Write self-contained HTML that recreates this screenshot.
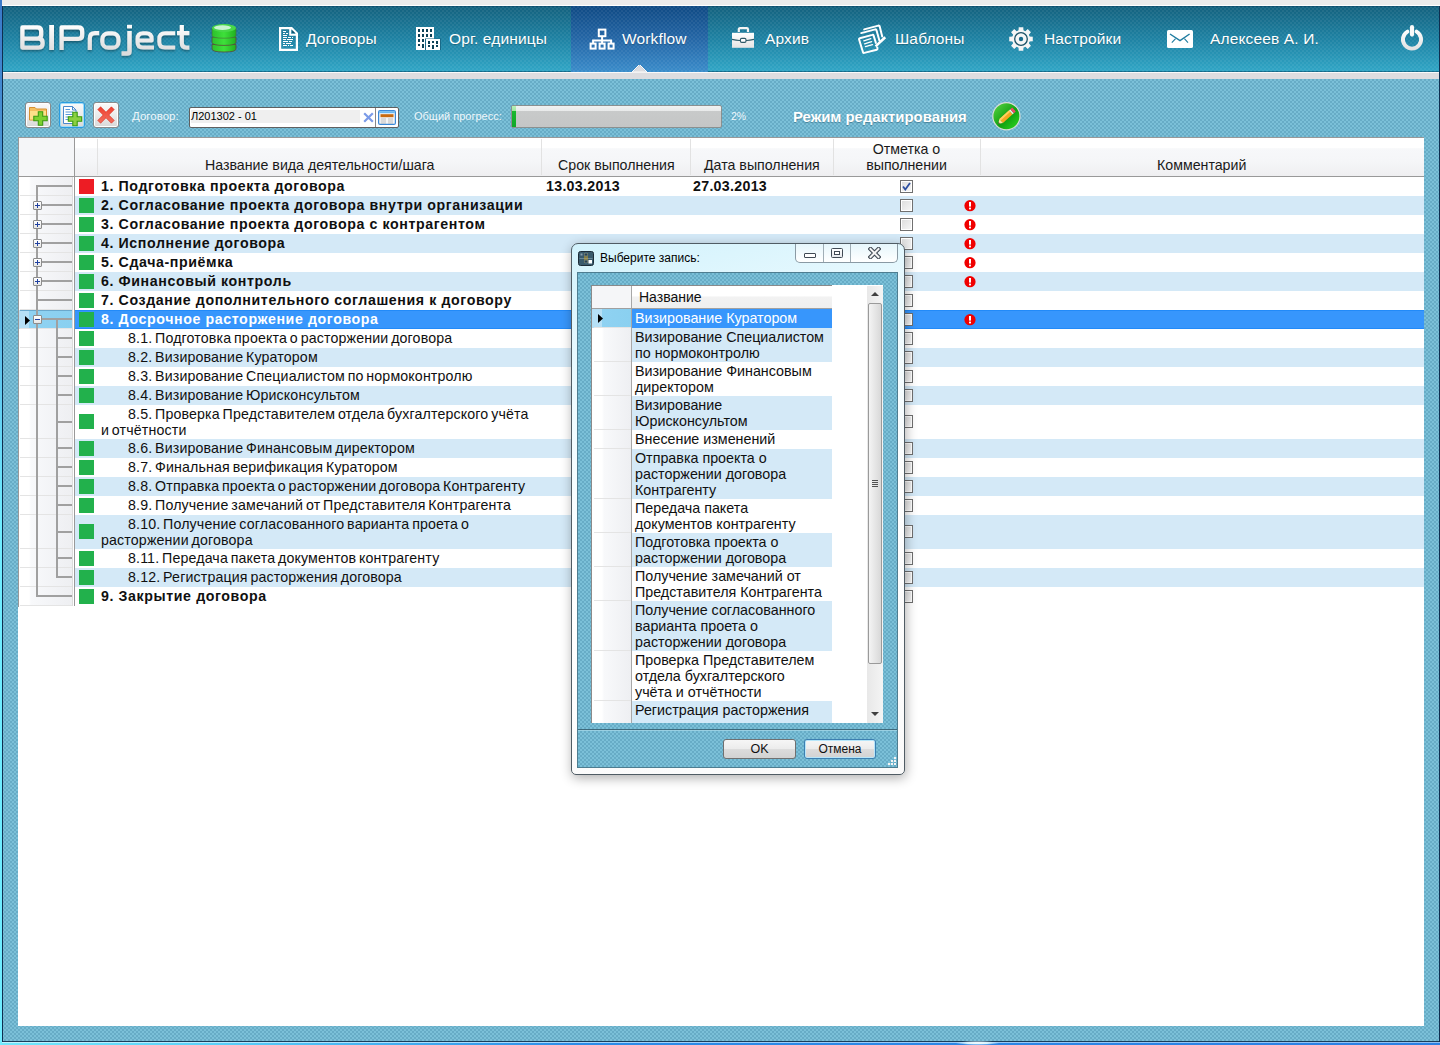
<!DOCTYPE html>
<html><head><meta charset="utf-8"><style>
*{margin:0;padding:0;box-sizing:border-box}
html,body{width:1440px;height:1045px;overflow:hidden}
body{position:relative;font-family:"Liberation Sans",sans-serif;background:#70b4cc}
.a{position:absolute}
.pat{background-image:repeating-conic-gradient(rgba(255,255,255,.06) 0 25%,rgba(0,0,0,.0) 0 50%);background-size:4px 4px}
.nav{position:absolute;top:0;height:72px;color:#fff;font-size:15.5px;white-space:nowrap}
.navt{position:absolute;top:30px;line-height:18px;letter-spacing:.15px;text-shadow:0 1px 1px rgba(0,0,0,.25)}
.row{position:absolute;left:75px;width:1349px}
.rt{position:absolute;left:101px;font-size:14.2px;line-height:16px;color:#101010;white-space:nowrap;letter-spacing:.15px;word-spacing:-1.3px}
.b{font-weight:bold;letter-spacing:.6px;word-spacing:0}
.sq{position:absolute;left:79px;width:15px;height:15px;background:#22b14c}
.cb{position:absolute;left:900px;width:13px;height:13px;border:1px solid #707070;background:linear-gradient(135deg,#dcdcdc,#f8f8f8);box-shadow:inset 0 0 0 1px #fff}
.ex{position:absolute;left:964px;width:12px;height:12px}
.tl{position:absolute;background:#a0a0a0}
.sep{position:absolute;left:20px;width:52px;height:1px;background:#e4e4e4}
.hd{position:absolute;font-size:14.2px;color:#1a1a1a;white-space:nowrap;line-height:16px}
.dr{position:absolute;left:632px;width:200px;font-size:14px;line-height:16px;color:#101010;padding:1px 0 0 3px}
.btn{position:absolute;border:1px solid #707070;border-radius:3px;background:linear-gradient(#f6f6f6 0%,#ececec 48%,#dcdcdc 52%,#d2d2d2 100%);font-size:12.5px;color:#101010;text-align:center;line-height:18px}
</style></head>
<body>
<div class="a" style="left:0;top:0;width:1440px;height:5px;background:#ebebeb"></div>
<div class="a" style="left:0;top:5px;width:1440px;height:1px;background:#fff"></div>
<div class="a pat" style="left:0;top:6px;width:1440px;height:66px;background-color:#1f7e9e;background:linear-gradient(#0b5070 0,#0b5070 1px,#14627f 1px,#1e82a3 50%,#30a5c5 98%,#136c8c 98%);"></div>
<div class="a pat" style="left:0;top:6px;width:1440px;height:66px"></div>
<div class="a" style="left:571px;top:6px;width:137px;height:66px;background:linear-gradient(#0f4a84,#2466a6 50%,#3a8cca)"></div>
<div class="a pat" style="left:571px;top:6px;width:137px;height:66px"></div>
<div class="a" style="left:0;top:72px;width:1440px;height:1px;background:#fafafa"></div>
<div class="a" style="left:0;top:73px;width:1440px;height:6px;background:#dddde0"></div>
<svg class="a" style="left:632px;top:65px" width="15" height="8"><polygon points="0,7.5 7.5,0 15,7.5" fill="#dddde0"/><polygon points="0,7 7.5,-0.5 15,7" fill="none" stroke="#fafafa" stroke-width="1"/></svg>
<div class="a" style="left:0;top:79px;width:1440px;height:962px;background:repeating-conic-gradient(#7bc0d8 0 25%,#67acc6 0 50%);background-size:4px 4px"></div>
<div class="a" style="left:0;top:1041px;width:1440px;height:1px;background:#1a3c5a"></div>
<div class="a" style="left:0;top:1042px;width:1440px;height:3px;background:linear-gradient(90deg,#70e8fc 0,#58d0f8 15%,#2a8ce8 40%,#2a80e4 100%)"></div>
<div class="a" style="left:0;top:1042px;width:1440px;height:1px;background:linear-gradient(90deg,#c0f4ff,#a0d0f8 50%,#90c0f0)"></div>
<div class="a" style="left:955px;top:1041px;width:45px;height:4px;background:radial-gradient(ellipse at center,#ffffff 0,#d8f4ff 35%,rgba(120,200,250,0) 70%)"></div>
<div class="a" style="left:0;top:0;width:2px;height:1045px;background:linear-gradient(#3a78c8,#5ab8e8 30%,#70ecff 50%,#70ecff)"></div>
<div class="a" style="left:2px;top:6px;width:1px;height:1036px;background:#0e2e50"></div>
<div class="a" style="left:1439px;top:6px;width:1px;height:1036px;background:#0e2e50"></div>
<div class="navt a" style="left:306px;color:#fff;font-size:15.5px;white-space:nowrap">Договоры</div>
<div class="navt a" style="left:449px;color:#fff;font-size:15.5px;white-space:nowrap">Орг. единицы</div>
<div class="navt a" style="left:622px;color:#fff;font-size:15.5px;white-space:nowrap">Workflow</div>
<div class="navt a" style="left:765px;color:#fff;font-size:15.5px;white-space:nowrap">Архив</div>
<div class="navt a" style="left:895px;color:#fff;font-size:15.5px;white-space:nowrap">Шаблоны</div>
<div class="navt a" style="left:1044px;color:#fff;font-size:15.5px;white-space:nowrap">Настройки</div>
<div class="navt a" style="left:1210px;color:#fff;font-size:15.5px;white-space:nowrap">Алексеев А. И.</div>
<div class="a" style="left:25px;top:102px;width:26px;height:26px;border:1px solid #8a8a8a;border-radius:3px;box-shadow:inset 0 0 0 1px #fff;background:linear-gradient(#fafafa,#ececec 50%,#d8d8d8)"></div>
<div class="a" style="left:59px;top:102px;width:26px;height:26px;border:1px solid #2a9ce0;border-radius:3px;box-shadow:inset 0 0 0 1px #9edcf8;background:linear-gradient(#fafafa,#ececec 50%,#d8d8d8)"></div>
<div class="a" style="left:93px;top:102px;width:26px;height:26px;border:1px solid #8a8a8a;border-radius:3px;box-shadow:inset 0 0 0 1px #fff;background:linear-gradient(#fafafa,#ececec 50%,#d8d8d8)"></div>
<div class="a" style="left:132px;top:110px;font-size:11.5px;color:#eef6fa">Договор:</div>
<div class="a" style="left:189px;top:107px;width:210px;height:21px;border:1px solid #606060;border-radius:2px;background:#fff"></div>
<div class="a" style="left:191px;top:110px;width:169px;height:13px;background:#efefef"></div>
<div class="a" style="left:191px;top:110px;font-size:11px;color:#000;line-height:13px">Л201302 - 01</div>
<div class="a" style="left:375px;top:108px;width:1px;height:19px;background:#888"></div>
<div class="a" style="left:414px;top:110px;font-size:11px;color:#eef6fa">Общий прогресс:</div>
<div class="a" style="left:511px;top:105px;width:211px;height:23px;border:1px solid #8a9090;border-radius:2px;background:linear-gradient(#f0f2f2 0,#e8eaea 22%,#c8caca 24%,#c4c6c6)"></div>
<div class="a" style="left:512px;top:106px;width:4px;height:21px;background:linear-gradient(#b8f0b8 0,#a0e8a0 22%,#18b830 24%,#10a828)"></div>
<div class="a" style="left:731px;top:110px;font-size:10.5px;color:#eef6fa">2%</div>
<div class="a" style="left:793px;top:109px;font-size:14.9px;font-weight:bold;color:#fff;text-shadow:0 1px 1px rgba(0,40,60,.35)">Режим редактирования</div>
<div class="a" style="left:18px;top:137px;width:1406px;height:889px;background:#fff"></div>
<div class="a" style="left:18px;top:137px;width:1406px;height:470px;border-left:1px solid #999;border-top:1px solid #999"></div>
<div class="a" style="left:75px;top:138px;width:1349px;height:38px;background:linear-gradient(#fff 0,#fff 26%,#f7f8fa 28%,#f5f6f8 60%,#efeff1 100%)"></div>
<div class="a" style="left:19px;top:138px;width:55px;height:38px;background:#f5f6f8"></div>
<div class="a" style="left:18px;top:176px;width:1406px;height:1px;background:#999"></div>
<div class="a" style="left:74px;top:137px;width:1px;height:469px;background:#999"></div>
<div class="a" style="left:97px;top:139px;width:1px;height:36px;background:#e2e2e2"></div>
<div class="a" style="left:541px;top:139px;width:1px;height:36px;background:#e2e2e2"></div>
<div class="a" style="left:690px;top:139px;width:1px;height:36px;background:#e2e2e2"></div>
<div class="a" style="left:833px;top:139px;width:1px;height:36px;background:#e2e2e2"></div>
<div class="a" style="left:980px;top:139px;width:1px;height:36px;background:#e2e2e2"></div>
<div class="hd" style="left:205px;top:157px">Название вида деятельности/шага</div>
<div class="hd" style="left:558px;top:157px">Срок выполнения</div>
<div class="hd" style="left:704px;top:157px">Дата выполнения</div>
<div class="hd" style="left:833px;width:147px;text-align:center;top:141px;line-height:16px">Отметка о<br>выполнении</div>
<div class="hd" style="left:1157px;top:157px">Комментарий</div>
<div class="row" style="top:177px;height:19px;background:#ffffff"></div>
<div class="a" style="left:19px;top:177px;width:53px;height:19px;background:linear-gradient(90deg,#fff 0,#fff 10px,#f8f9fb 12px,#eeeff2 53px)"></div>
<div class="sep" style="top:195px"></div>
<div class="sq" style="top:179px;background:#ed1c24"></div>
<div class="rt b" style="top:178px;left:101px;color:#101010">1. Подготовка проекта договора</div>
<div class="rt b" style="top:178px;left:546px;letter-spacing:.3px">13.03.2013</div>
<div class="rt b" style="top:178px;left:693px;letter-spacing:.3px">27.03.2013</div>
<div class="cb" style="top:180px"></div><svg class="a" style="left:902px;top:182px" width="9" height="9" viewBox="0 0 9 9"><path d="M1 4.5 L3.3 7.5 L8 1" fill="none" stroke="#2d4fa0" stroke-width="1.8"/></svg>
<div class="tl" style="left:36px;top:185px;width:2px;height:11px"></div>
<div class="tl" style="left:37px;top:185px;width:35px;height:2px"></div>
<div class="row" style="top:196px;height:19px;background:#d4e9f7"></div>
<div class="a" style="left:19px;top:196px;width:53px;height:19px;background:linear-gradient(90deg,#fff 0,#fff 10px,#f8f9fb 12px,#eeeff2 53px)"></div>
<div class="sep" style="top:214px"></div>
<div class="sq" style="top:198px;background:#22b14c"></div>
<div class="rt b" style="top:197px;left:101px;color:#101010">2. Согласование проекта договора внутри организации</div>
<div class="cb" style="top:199px"></div>
<svg class="ex" style="top:200px" width="12" height="12" viewBox="0 0 12 12"><circle cx="6" cy="5.7" r="5.6" fill="#f00000"/><rect x="5" y="2" width="2" height="4.6" fill="#fff"/><rect x="5" y="7.6" width="2" height="1.8" fill="#fff"/></svg>
<div class="tl" style="left:36px;top:196px;width:2px;height:19px"></div>
<div class="tl" style="left:37px;top:204px;width:35px;height:2px"></div>
<div class="a" style="left:33px;top:201px;width:9px;height:9px;border:1px solid #8c8c8c;border-radius:1px;background:linear-gradient(#fff,#e6e6e6)"></div>
<div class="a" style="left:35px;top:205px;width:5px;height:1px;background:#2040a0"></div>
<div class="a" style="left:37px;top:203px;width:1px;height:5px;background:#2040a0"></div>
<div class="row" style="top:215px;height:19px;background:#ffffff"></div>
<div class="a" style="left:19px;top:215px;width:53px;height:19px;background:linear-gradient(90deg,#fff 0,#fff 10px,#f8f9fb 12px,#eeeff2 53px)"></div>
<div class="sep" style="top:233px"></div>
<div class="sq" style="top:217px;background:#22b14c"></div>
<div class="rt b" style="top:216px;left:101px;color:#101010">3. Согласование проекта договора с контрагентом</div>
<div class="cb" style="top:218px"></div>
<svg class="ex" style="top:219px" width="12" height="12" viewBox="0 0 12 12"><circle cx="6" cy="5.7" r="5.6" fill="#f00000"/><rect x="5" y="2" width="2" height="4.6" fill="#fff"/><rect x="5" y="7.6" width="2" height="1.8" fill="#fff"/></svg>
<div class="tl" style="left:36px;top:215px;width:2px;height:19px"></div>
<div class="tl" style="left:37px;top:223px;width:35px;height:2px"></div>
<div class="a" style="left:33px;top:220px;width:9px;height:9px;border:1px solid #8c8c8c;border-radius:1px;background:linear-gradient(#fff,#e6e6e6)"></div>
<div class="a" style="left:35px;top:224px;width:5px;height:1px;background:#2040a0"></div>
<div class="a" style="left:37px;top:222px;width:1px;height:5px;background:#2040a0"></div>
<div class="row" style="top:234px;height:19px;background:#d4e9f7"></div>
<div class="a" style="left:19px;top:234px;width:53px;height:19px;background:linear-gradient(90deg,#fff 0,#fff 10px,#f8f9fb 12px,#eeeff2 53px)"></div>
<div class="sep" style="top:252px"></div>
<div class="sq" style="top:236px;background:#22b14c"></div>
<div class="rt b" style="top:235px;left:101px;color:#101010">4. Исполнение договора</div>
<div class="cb" style="top:237px"></div>
<svg class="ex" style="top:238px" width="12" height="12" viewBox="0 0 12 12"><circle cx="6" cy="5.7" r="5.6" fill="#f00000"/><rect x="5" y="2" width="2" height="4.6" fill="#fff"/><rect x="5" y="7.6" width="2" height="1.8" fill="#fff"/></svg>
<div class="tl" style="left:36px;top:234px;width:2px;height:19px"></div>
<div class="tl" style="left:37px;top:242px;width:35px;height:2px"></div>
<div class="a" style="left:33px;top:239px;width:9px;height:9px;border:1px solid #8c8c8c;border-radius:1px;background:linear-gradient(#fff,#e6e6e6)"></div>
<div class="a" style="left:35px;top:243px;width:5px;height:1px;background:#2040a0"></div>
<div class="a" style="left:37px;top:241px;width:1px;height:5px;background:#2040a0"></div>
<div class="row" style="top:253px;height:19px;background:#ffffff"></div>
<div class="a" style="left:19px;top:253px;width:53px;height:19px;background:linear-gradient(90deg,#fff 0,#fff 10px,#f8f9fb 12px,#eeeff2 53px)"></div>
<div class="sep" style="top:271px"></div>
<div class="sq" style="top:255px;background:#22b14c"></div>
<div class="rt b" style="top:254px;left:101px;color:#101010">5. Сдача-приёмка</div>
<div class="cb" style="top:256px"></div>
<svg class="ex" style="top:257px" width="12" height="12" viewBox="0 0 12 12"><circle cx="6" cy="5.7" r="5.6" fill="#f00000"/><rect x="5" y="2" width="2" height="4.6" fill="#fff"/><rect x="5" y="7.6" width="2" height="1.8" fill="#fff"/></svg>
<div class="tl" style="left:36px;top:253px;width:2px;height:19px"></div>
<div class="tl" style="left:37px;top:261px;width:35px;height:2px"></div>
<div class="a" style="left:33px;top:258px;width:9px;height:9px;border:1px solid #8c8c8c;border-radius:1px;background:linear-gradient(#fff,#e6e6e6)"></div>
<div class="a" style="left:35px;top:262px;width:5px;height:1px;background:#2040a0"></div>
<div class="a" style="left:37px;top:260px;width:1px;height:5px;background:#2040a0"></div>
<div class="row" style="top:272px;height:19px;background:#d4e9f7"></div>
<div class="a" style="left:19px;top:272px;width:53px;height:19px;background:linear-gradient(90deg,#fff 0,#fff 10px,#f8f9fb 12px,#eeeff2 53px)"></div>
<div class="sep" style="top:290px"></div>
<div class="sq" style="top:274px;background:#22b14c"></div>
<div class="rt b" style="top:273px;left:101px;color:#101010">6. Финансовый контроль</div>
<div class="cb" style="top:275px"></div>
<svg class="ex" style="top:276px" width="12" height="12" viewBox="0 0 12 12"><circle cx="6" cy="5.7" r="5.6" fill="#f00000"/><rect x="5" y="2" width="2" height="4.6" fill="#fff"/><rect x="5" y="7.6" width="2" height="1.8" fill="#fff"/></svg>
<div class="tl" style="left:36px;top:272px;width:2px;height:19px"></div>
<div class="tl" style="left:37px;top:280px;width:35px;height:2px"></div>
<div class="a" style="left:33px;top:277px;width:9px;height:9px;border:1px solid #8c8c8c;border-radius:1px;background:linear-gradient(#fff,#e6e6e6)"></div>
<div class="a" style="left:35px;top:281px;width:5px;height:1px;background:#2040a0"></div>
<div class="a" style="left:37px;top:279px;width:1px;height:5px;background:#2040a0"></div>
<div class="row" style="top:291px;height:19px;background:#ffffff"></div>
<div class="a" style="left:19px;top:291px;width:53px;height:19px;background:linear-gradient(90deg,#fff 0,#fff 10px,#f8f9fb 12px,#eeeff2 53px)"></div>
<div class="sep" style="top:309px"></div>
<div class="sq" style="top:293px;background:#22b14c"></div>
<div class="rt b" style="top:292px;left:101px;color:#101010">7. Создание дополнительного соглашения к договору</div>
<div class="cb" style="top:294px"></div>
<div class="tl" style="left:36px;top:291px;width:2px;height:19px"></div>
<div class="tl" style="left:37px;top:299px;width:35px;height:2px"></div>
<div class="row" style="top:310px;height:19px;background:#3796fc"></div>
<div class="row" style="top:310px;height:19px;border-top:1px solid #228af8;border-bottom:1px solid #228af8"></div>
<div class="a" style="left:19px;top:310px;width:53px;height:19px;background:linear-gradient(90deg,#b6e0f6 0,#b6e0f6 10px,#8fd2f2 10px,#8ad0f0)"></div>
<div class="a" style="left:20px;top:310px;width:52px;height:19px;border-top:1px solid #6aa8cc;border-bottom:1px solid #6aa8cc"></div>
<div class="sep" style="top:328px"></div>
<div class="sq" style="top:312px;background:#22b14c"></div>
<div class="rt b" style="top:311px;left:101px;color:#fff">8. Досрочное расторжение договора</div>
<div class="cb" style="top:313px"></div>
<svg class="ex" style="top:314px" width="12" height="12" viewBox="0 0 12 12"><circle cx="6" cy="5.7" r="5.6" fill="#f00000"/><rect x="5" y="2" width="2" height="4.6" fill="#fff"/><rect x="5" y="7.6" width="2" height="1.8" fill="#fff"/></svg>
<div class="tl" style="left:36px;top:310px;width:2px;height:19px"></div>
<div class="tl" style="left:37px;top:318px;width:35px;height:2px"></div>
<div class="a" style="left:33px;top:315px;width:9px;height:9px;border:1px solid #8c8c8c;border-radius:1px;background:linear-gradient(#fff,#e6e6e6)"></div>
<div class="a" style="left:35px;top:319px;width:5px;height:1px;background:#2040a0"></div>
<div class="tl" style="left:56px;top:318px;width:2px;height:11px"></div>
<svg class="a" style="left:25px;top:316px" width="6" height="10"><polygon points="0,0 5,4.5 0,9" fill="#000"/></svg>
<div class="row" style="top:329px;height:19px;background:#ffffff"></div>
<div class="a" style="left:19px;top:329px;width:53px;height:19px;background:linear-gradient(90deg,#fff 0,#fff 10px,#f8f9fb 12px,#eeeff2 53px)"></div>
<div class="sep" style="top:347px"></div>
<div class="sq" style="top:331px;background:#22b14c"></div>
<div class="rt" style="top:330px;left:128px;color:#101010">8.1. Подготовка проекта о расторжении договора</div>
<div class="cb" style="top:332px"></div>
<div class="tl" style="left:36px;top:329px;width:2px;height:19px"></div>
<div class="tl" style="left:56px;top:329px;width:2px;height:19px"></div>
<div class="tl" style="left:57px;top:337px;width:15px;height:2px"></div>
<div class="row" style="top:348px;height:19px;background:#d4e9f7"></div>
<div class="a" style="left:19px;top:348px;width:53px;height:19px;background:linear-gradient(90deg,#fff 0,#fff 10px,#f8f9fb 12px,#eeeff2 53px)"></div>
<div class="sep" style="top:366px"></div>
<div class="sq" style="top:350px;background:#22b14c"></div>
<div class="rt" style="top:349px;left:128px;color:#101010">8.2. Визирование Куратором</div>
<div class="cb" style="top:351px"></div>
<div class="tl" style="left:36px;top:348px;width:2px;height:19px"></div>
<div class="tl" style="left:56px;top:348px;width:2px;height:19px"></div>
<div class="tl" style="left:57px;top:356px;width:15px;height:2px"></div>
<div class="row" style="top:367px;height:19px;background:#ffffff"></div>
<div class="a" style="left:19px;top:367px;width:53px;height:19px;background:linear-gradient(90deg,#fff 0,#fff 10px,#f8f9fb 12px,#eeeff2 53px)"></div>
<div class="sep" style="top:385px"></div>
<div class="sq" style="top:369px;background:#22b14c"></div>
<div class="rt" style="top:368px;left:128px;color:#101010">8.3. Визирование Специалистом по нормоконтролю</div>
<div class="cb" style="top:370px"></div>
<div class="tl" style="left:36px;top:367px;width:2px;height:19px"></div>
<div class="tl" style="left:56px;top:367px;width:2px;height:19px"></div>
<div class="tl" style="left:57px;top:375px;width:15px;height:2px"></div>
<div class="row" style="top:386px;height:19px;background:#d4e9f7"></div>
<div class="a" style="left:19px;top:386px;width:53px;height:19px;background:linear-gradient(90deg,#fff 0,#fff 10px,#f8f9fb 12px,#eeeff2 53px)"></div>
<div class="sep" style="top:404px"></div>
<div class="sq" style="top:388px;background:#22b14c"></div>
<div class="rt" style="top:387px;left:128px;color:#101010">8.4. Визирование Юрисконсультом</div>
<div class="cb" style="top:389px"></div>
<div class="tl" style="left:36px;top:386px;width:2px;height:19px"></div>
<div class="tl" style="left:56px;top:386px;width:2px;height:19px"></div>
<div class="tl" style="left:57px;top:394px;width:15px;height:2px"></div>
<div class="row" style="top:405px;height:34px;background:#ffffff"></div>
<div class="a" style="left:19px;top:405px;width:53px;height:34px;background:linear-gradient(90deg,#fff 0,#fff 10px,#f8f9fb 12px,#eeeff2 53px)"></div>
<div class="sep" style="top:438px"></div>
<div class="sq" style="top:414px;background:#22b14c"></div>
<div class="rt" style="top:406px;left:128px;color:#101010">8.5. Проверка Представителем отдела бухгалтерского учёта</div>
<div class="rt" style="top:422px;left:101px;color:#101010">и отчётности</div>
<div class="cb" style="top:415px"></div>
<div class="tl" style="left:36px;top:405px;width:2px;height:34px"></div>
<div class="tl" style="left:56px;top:405px;width:2px;height:34px"></div>
<div class="tl" style="left:57px;top:421px;width:15px;height:2px"></div>
<div class="row" style="top:439px;height:19px;background:#d4e9f7"></div>
<div class="a" style="left:19px;top:439px;width:53px;height:19px;background:linear-gradient(90deg,#fff 0,#fff 10px,#f8f9fb 12px,#eeeff2 53px)"></div>
<div class="sep" style="top:457px"></div>
<div class="sq" style="top:441px;background:#22b14c"></div>
<div class="rt" style="top:440px;left:128px;color:#101010">8.6. Визирование Финансовым директором</div>
<div class="cb" style="top:442px"></div>
<div class="tl" style="left:36px;top:439px;width:2px;height:19px"></div>
<div class="tl" style="left:56px;top:439px;width:2px;height:19px"></div>
<div class="tl" style="left:57px;top:447px;width:15px;height:2px"></div>
<div class="row" style="top:458px;height:19px;background:#ffffff"></div>
<div class="a" style="left:19px;top:458px;width:53px;height:19px;background:linear-gradient(90deg,#fff 0,#fff 10px,#f8f9fb 12px,#eeeff2 53px)"></div>
<div class="sep" style="top:476px"></div>
<div class="sq" style="top:460px;background:#22b14c"></div>
<div class="rt" style="top:459px;left:128px;color:#101010">8.7. Финальная верификация Куратором</div>
<div class="cb" style="top:461px"></div>
<div class="tl" style="left:36px;top:458px;width:2px;height:19px"></div>
<div class="tl" style="left:56px;top:458px;width:2px;height:19px"></div>
<div class="tl" style="left:57px;top:466px;width:15px;height:2px"></div>
<div class="row" style="top:477px;height:19px;background:#d4e9f7"></div>
<div class="a" style="left:19px;top:477px;width:53px;height:19px;background:linear-gradient(90deg,#fff 0,#fff 10px,#f8f9fb 12px,#eeeff2 53px)"></div>
<div class="sep" style="top:495px"></div>
<div class="sq" style="top:479px;background:#22b14c"></div>
<div class="rt" style="top:478px;left:128px;color:#101010">8.8. Отправка проекта о расторжении договора Контрагенту</div>
<div class="cb" style="top:480px"></div>
<div class="tl" style="left:36px;top:477px;width:2px;height:19px"></div>
<div class="tl" style="left:56px;top:477px;width:2px;height:19px"></div>
<div class="tl" style="left:57px;top:485px;width:15px;height:2px"></div>
<div class="row" style="top:496px;height:19px;background:#ffffff"></div>
<div class="a" style="left:19px;top:496px;width:53px;height:19px;background:linear-gradient(90deg,#fff 0,#fff 10px,#f8f9fb 12px,#eeeff2 53px)"></div>
<div class="sep" style="top:514px"></div>
<div class="sq" style="top:498px;background:#22b14c"></div>
<div class="rt" style="top:497px;left:128px;color:#101010">8.9. Получение замечаний от Представителя Контрагента</div>
<div class="cb" style="top:499px"></div>
<div class="tl" style="left:36px;top:496px;width:2px;height:19px"></div>
<div class="tl" style="left:56px;top:496px;width:2px;height:19px"></div>
<div class="tl" style="left:57px;top:504px;width:15px;height:2px"></div>
<div class="row" style="top:515px;height:34px;background:#d4e9f7"></div>
<div class="a" style="left:19px;top:515px;width:53px;height:34px;background:linear-gradient(90deg,#fff 0,#fff 10px,#f8f9fb 12px,#eeeff2 53px)"></div>
<div class="sep" style="top:548px"></div>
<div class="sq" style="top:524px;background:#22b14c"></div>
<div class="rt" style="top:516px;left:128px;color:#101010">8.10. Получение согласованного варианта проета о</div>
<div class="rt" style="top:532px;left:101px;color:#101010">расторжении договора</div>
<div class="cb" style="top:525px"></div>
<div class="tl" style="left:36px;top:515px;width:2px;height:34px"></div>
<div class="tl" style="left:56px;top:515px;width:2px;height:34px"></div>
<div class="tl" style="left:57px;top:531px;width:15px;height:2px"></div>
<div class="row" style="top:549px;height:19px;background:#ffffff"></div>
<div class="a" style="left:19px;top:549px;width:53px;height:19px;background:linear-gradient(90deg,#fff 0,#fff 10px,#f8f9fb 12px,#eeeff2 53px)"></div>
<div class="sep" style="top:567px"></div>
<div class="sq" style="top:551px;background:#22b14c"></div>
<div class="rt" style="top:550px;left:128px;color:#101010">8.11. Передача пакета документов контрагенту</div>
<div class="cb" style="top:552px"></div>
<div class="tl" style="left:36px;top:549px;width:2px;height:19px"></div>
<div class="tl" style="left:56px;top:549px;width:2px;height:19px"></div>
<div class="tl" style="left:57px;top:557px;width:15px;height:2px"></div>
<div class="row" style="top:568px;height:19px;background:#d4e9f7"></div>
<div class="a" style="left:19px;top:568px;width:53px;height:19px;background:linear-gradient(90deg,#fff 0,#fff 10px,#f8f9fb 12px,#eeeff2 53px)"></div>
<div class="sep" style="top:586px"></div>
<div class="sq" style="top:570px;background:#22b14c"></div>
<div class="rt" style="top:569px;left:128px;color:#101010">8.12. Регистрация расторжения договора</div>
<div class="cb" style="top:571px"></div>
<div class="tl" style="left:36px;top:568px;width:2px;height:19px"></div>
<div class="tl" style="left:56px;top:568px;width:2px;height:10px"></div>
<div class="tl" style="left:57px;top:576px;width:15px;height:2px"></div>
<div class="row" style="top:587px;height:19px;background:#ffffff"></div>
<div class="a" style="left:19px;top:587px;width:53px;height:19px;background:linear-gradient(90deg,#fff 0,#fff 10px,#f8f9fb 12px,#eeeff2 53px)"></div>
<div class="sep" style="top:605px"></div>
<div class="sq" style="top:589px;background:#22b14c"></div>
<div class="rt b" style="top:588px;left:101px;color:#101010">9. Закрытие договора</div>
<div class="cb" style="top:590px"></div>
<div class="tl" style="left:36px;top:587px;width:2px;height:10px"></div>
<div class="tl" style="left:37px;top:595px;width:35px;height:2px"></div>
<div class="a" style="left:72px;top:177px;width:1px;height:429px;background:#dcdcdc"></div>
<div class="a" style="left:571px;top:243px;width:334px;height:532px;border-radius:7px 7px 5px 5px;box-shadow:1px 3px 12px rgba(0,0,0,.32)"></div>
<div class="a" style="left:571px;top:243px;width:334px;height:532px;border:1px solid #505c64;border-radius:7px 7px 5px 5px;background:linear-gradient(165deg,#d2f2fc 0%,#eefbff 25%,#ffffff 55%,#fafafa 100%)"></div>
<div class="a" style="left:600px;top:250px;font-size:12px;color:#000;line-height:16px">Выберите запись:</div>
<div class="a" style="left:795px;top:244px;width:103px;height:19px;border:1px solid #8a9aa4;border-top:none;border-radius:0 0 5px 5px;background:linear-gradient(#e6f6fc,#ffffff)"></div>
<div class="a" style="left:823px;top:244px;width:1px;height:18px;background:#a0aeb6"></div>
<div class="a" style="left:850px;top:244px;width:1px;height:18px;background:#a0aeb6"></div>
<div class="a" style="left:804px;top:253px;width:12px;height:5px;border:1px solid #404a54;border-radius:1px;background:#fff"></div>
<div class="a" style="left:831px;top:248px;width:12px;height:10px;border:1.5px solid #404a54;border-radius:1.5px;background:linear-gradient(#fff,#e4e8ec)"></div>
<div class="a" style="left:834px;top:251px;width:6px;height:4px;border:1px solid #404a54;background:#fff"></div>
<svg class="a" style="left:868px;top:247px" width="13" height="12" viewBox="0 0 13 12"><path d="M2.5 2 L10.5 10 M10.5 2 L2.5 10" stroke="#404a54" stroke-width="4.2" stroke-linecap="square"/><path d="M2.5 2 L10.5 10 M10.5 2 L2.5 10" stroke="#f4f4f4" stroke-width="2" stroke-linecap="square"/></svg>
<div class="a" style="left:577px;top:272px;width:321px;height:496px;background:repeating-conic-gradient(#7bc0d8 0 25%,#67acc6 0 50%);background-size:4px 4px;border:1px solid #4e7d90"></div>
<div class="a" style="left:591px;top:285px;width:292px;height:438px;background:#fff;border-left:1px solid #8a8a8a"></div>
<div class="a" style="left:591px;top:285px;width:241px;height:1px;background:#8a8a8a"></div>
<div class="a" style="left:592px;top:286px;width:40px;height:22px;background:#f5f6f8"></div>
<div class="a" style="left:632px;top:286px;width:200px;height:22px;background:linear-gradient(#fff 0,#fff 45%,#f2f2f2 50%,#efefef)"></div>
<div class="a" style="left:631px;top:286px;width:1px;height:437px;background:#a8a8a8"></div>
<div class="a" style="left:592px;top:308px;width:240px;height:1px;background:#a0a0a0"></div>
<div class="a" style="left:639px;top:289px;font-size:14px;color:#101010;line-height:16px">Название</div>
<div class="a" style="left:632px;top:309px;width:200px;height:19px;background:#3796fc;overflow:hidden"><div style="padding:1px 0 0 3px;font-size:14.3px;line-height:16px;color:#fff;white-space:nowrap">Визирование Куратором</div></div>
<div class="a" style="left:592px;top:309px;width:39px;height:19px;background:linear-gradient(90deg,#b6e0f6 0,#b6e0f6 10px,#8fd2f2 10px,#8ad0f0)"></div>
<div class="a" style="left:594px;top:327px;width:37px;height:1px;background:#e4e4e4"></div>
<svg class="a" style="left:598px;top:314px" width="6" height="10"><polygon points="0,0 5,4.5 0,9" fill="#000"/></svg>
<div class="a" style="left:632px;top:328px;width:200px;height:34px;background:#d4e9f7;overflow:hidden"><div style="padding:1px 0 0 3px;font-size:14.3px;line-height:16px;color:#101010;white-space:nowrap">Визирование Специалистом<br>по нормоконтролю</div></div>
<div class="a" style="left:592px;top:328px;width:39px;height:34px;background:linear-gradient(90deg,#fff 0,#fff 10px,#f8f9fb 12px,#eeeff2 39px)"></div>
<div class="a" style="left:594px;top:361px;width:37px;height:1px;background:#e4e4e4"></div>
<div class="a" style="left:632px;top:362px;width:200px;height:34px;background:#ffffff;overflow:hidden"><div style="padding:1px 0 0 3px;font-size:14.3px;line-height:16px;color:#101010;white-space:nowrap">Визирование Финансовым<br>директором</div></div>
<div class="a" style="left:592px;top:362px;width:39px;height:34px;background:linear-gradient(90deg,#fff 0,#fff 10px,#f8f9fb 12px,#eeeff2 39px)"></div>
<div class="a" style="left:594px;top:395px;width:37px;height:1px;background:#e4e4e4"></div>
<div class="a" style="left:632px;top:396px;width:200px;height:34px;background:#d4e9f7;overflow:hidden"><div style="padding:1px 0 0 3px;font-size:14.3px;line-height:16px;color:#101010;white-space:nowrap">Визирование<br>Юрисконсультом</div></div>
<div class="a" style="left:592px;top:396px;width:39px;height:34px;background:linear-gradient(90deg,#fff 0,#fff 10px,#f8f9fb 12px,#eeeff2 39px)"></div>
<div class="a" style="left:594px;top:429px;width:37px;height:1px;background:#e4e4e4"></div>
<div class="a" style="left:632px;top:430px;width:200px;height:19px;background:#ffffff;overflow:hidden"><div style="padding:1px 0 0 3px;font-size:14.3px;line-height:16px;color:#101010;white-space:nowrap">Внесение изменений</div></div>
<div class="a" style="left:592px;top:430px;width:39px;height:19px;background:linear-gradient(90deg,#fff 0,#fff 10px,#f8f9fb 12px,#eeeff2 39px)"></div>
<div class="a" style="left:594px;top:448px;width:37px;height:1px;background:#e4e4e4"></div>
<div class="a" style="left:632px;top:449px;width:200px;height:50px;background:#d4e9f7;overflow:hidden"><div style="padding:1px 0 0 3px;font-size:14.3px;line-height:16px;color:#101010;white-space:nowrap">Отправка проекта о<br>расторжении договора<br>Контрагенту</div></div>
<div class="a" style="left:592px;top:449px;width:39px;height:50px;background:linear-gradient(90deg,#fff 0,#fff 10px,#f8f9fb 12px,#eeeff2 39px)"></div>
<div class="a" style="left:594px;top:498px;width:37px;height:1px;background:#e4e4e4"></div>
<div class="a" style="left:632px;top:499px;width:200px;height:34px;background:#ffffff;overflow:hidden"><div style="padding:1px 0 0 3px;font-size:14.3px;line-height:16px;color:#101010;white-space:nowrap">Передача пакета<br>документов контрагенту</div></div>
<div class="a" style="left:592px;top:499px;width:39px;height:34px;background:linear-gradient(90deg,#fff 0,#fff 10px,#f8f9fb 12px,#eeeff2 39px)"></div>
<div class="a" style="left:594px;top:532px;width:37px;height:1px;background:#e4e4e4"></div>
<div class="a" style="left:632px;top:533px;width:200px;height:34px;background:#d4e9f7;overflow:hidden"><div style="padding:1px 0 0 3px;font-size:14.3px;line-height:16px;color:#101010;white-space:nowrap">Подготовка проекта о<br>расторжении договора</div></div>
<div class="a" style="left:592px;top:533px;width:39px;height:34px;background:linear-gradient(90deg,#fff 0,#fff 10px,#f8f9fb 12px,#eeeff2 39px)"></div>
<div class="a" style="left:594px;top:566px;width:37px;height:1px;background:#e4e4e4"></div>
<div class="a" style="left:632px;top:567px;width:200px;height:34px;background:#ffffff;overflow:hidden"><div style="padding:1px 0 0 3px;font-size:14.3px;line-height:16px;color:#101010;white-space:nowrap">Получение замечаний от<br>Представителя Контрагента</div></div>
<div class="a" style="left:592px;top:567px;width:39px;height:34px;background:linear-gradient(90deg,#fff 0,#fff 10px,#f8f9fb 12px,#eeeff2 39px)"></div>
<div class="a" style="left:594px;top:600px;width:37px;height:1px;background:#e4e4e4"></div>
<div class="a" style="left:632px;top:601px;width:200px;height:50px;background:#d4e9f7;overflow:hidden"><div style="padding:1px 0 0 3px;font-size:14.3px;line-height:16px;color:#101010;white-space:nowrap">Получение согласованного<br>варианта проета о<br>расторжении договора</div></div>
<div class="a" style="left:592px;top:601px;width:39px;height:50px;background:linear-gradient(90deg,#fff 0,#fff 10px,#f8f9fb 12px,#eeeff2 39px)"></div>
<div class="a" style="left:594px;top:650px;width:37px;height:1px;background:#e4e4e4"></div>
<div class="a" style="left:632px;top:651px;width:200px;height:50px;background:#ffffff;overflow:hidden"><div style="padding:1px 0 0 3px;font-size:14.3px;line-height:16px;color:#101010;white-space:nowrap">Проверка Представителем<br>отдела бухгалтерского<br>учёта и отчётности</div></div>
<div class="a" style="left:592px;top:651px;width:39px;height:50px;background:linear-gradient(90deg,#fff 0,#fff 10px,#f8f9fb 12px,#eeeff2 39px)"></div>
<div class="a" style="left:594px;top:700px;width:37px;height:1px;background:#e4e4e4"></div>
<div class="a" style="left:632px;top:701px;width:200px;height:22px;background:#d4e9f7;overflow:hidden"><div style="padding:1px 0 0 3px;font-size:14.3px;line-height:16px;color:#101010;white-space:nowrap">Регистрация расторжения<br>договора</div></div>
<div class="a" style="left:592px;top:701px;width:39px;height:22px;background:linear-gradient(90deg,#fff 0,#fff 10px,#f8f9fb 12px,#eeeff2 39px)"></div>
<div class="a" style="left:867px;top:286px;width:16px;height:437px;background:linear-gradient(90deg,#e8e8e8,#f4f4f4)"></div>
<svg class="a" style="left:871px;top:292px" width="8" height="5"><polygon points="0,4 4,0 8,4" fill="#404040"/></svg>
<svg class="a" style="left:871px;top:712px" width="8" height="5"><polygon points="0,0 4,4 8,0" fill="#404040"/></svg>
<div class="a" style="left:868px;top:303px;width:14px;height:361px;border:1px solid #9a9a9a;border-radius:2px;background:linear-gradient(90deg,#f4f4f4,#e6e6e6 50%,#d8d8d8)"></div>
<div class="a" style="left:872px;top:480px;width:6px;height:7px;background:repeating-linear-gradient(#505050 0 1px,transparent 1px 2px)"></div>
<div class="a" style="left:578px;top:729px;width:319px;height:1px;background:#3e6a7c"></div>
<div class="a" style="left:578px;top:730px;width:319px;height:1px;background:#9ad0e2"></div>
<div class="btn" style="left:723px;top:739px;width:73px;height:20px">OK</div>
<div class="btn" style="left:804px;top:739px;width:72px;height:20px;border-color:#3c7fb1;box-shadow:inset 0 0 0 1px #b6e6fa;font-size:12px">Отмена</div>
<svg class="a" style="left:0;top:0" width="200" height="72" viewBox="0 0 200 72">
<defs><linearGradient id="lg" gradientUnits="userSpaceOnUse" x1="0" y1="24" x2="0" y2="52"><stop offset="0" stop-color="#ffffff"/><stop offset="1" stop-color="#dcdcdc"/></linearGradient>
<filter id="ds" x="-10%" y="-10%" width="120%" height="130%"><feDropShadow dx="0" dy="1.5" stdDeviation="1" flood-color="#000" flood-opacity="0.35"/></filter></defs>
<g fill="none" stroke="url(#lg)" stroke-width="4.8" stroke-linejoin="round" filter="url(#ds)">
<path d="M22.4,47.6 V27.4 H37.4 Q41.2,27.4 41.2,31.2 V34.8 Q41.2,38.6 37.4,38.6 H22.4 M37.4,38.6 H38.6 Q42.6,38.6 42.6,42.4 V43.8 Q42.6,47.6 38.6,47.6 H22.4 V38" stroke-width="4.3"/>
<path d="M51.6,25 V50" stroke-width="4.8"/>
<path d="M61.6,50 V27.4 H78.4 Q82.2,27.4 82.2,31.2 V35 Q82.2,38.8 78.4,38.8 H61.6" stroke-width="4.3"/>
<path d="M89.8,50 V38.5 Q89.8,33.2 95,33.2 H99.2" stroke-width="4.2"/>
<rect x="102.3" y="33.3" width="16.2" height="14.4" rx="6" stroke-width="4.2"/>
<path d="M129.5,31 V51.5 Q129.5,53.6 127,53.6 H121.5" stroke-width="4.5"/>
<path d="M154,47.6 H143 Q137.5,47.6 137.5,42 V39 Q137.5,33.3 143,33.3 H146.2 Q151.7,33.3 151.7,39 V40.6 H137.5" stroke-width="4"/>
<path d="M175.2,33.3 H165 Q159.3,33.3 159.3,39 V42 Q159.3,47.6 165,47.6 H175.2" stroke-width="4"/>
<path d="M181.8,25 V42.5 Q181.8,47.6 186.5,47.6 H189.4 M177,33.2 H189.4" stroke-width="4.2"/>
</g>
<rect x="127" y="24.8" width="5" height="3.6" fill="#fafafa" filter="url(#ds)"/>
</svg>
<svg class="a" style="left:210px;top:22px" width="28" height="32" viewBox="0 0 28 32">
<defs><linearGradient id="dbg" x1="0" y1="0" x2="1" y2="0"><stop offset="0" stop-color="#2cc02c"/><stop offset=".5" stop-color="#3ee03a"/><stop offset="1" stop-color="#20b020"/></linearGradient></defs>
<path d="M2,22.5 V27 Q2,30 14,30 Q26,30 26,27 V22.5 Z" fill="url(#dbg)" stroke="#5a4a3a" stroke-width=".8"/>
<path d="M2,15 V20.5 Q2,23.4 14,23.4 Q26,23.4 26,20.5 V15 Z" fill="url(#dbg)" stroke="#5a4a3a" stroke-width=".8"/>
<path d="M2,6 V13.5 Q2,16.2 14,16.2 Q26,16.2 26,13.5 V6 Z" fill="url(#dbg)" stroke="#4a6a3a" stroke-width=".6"/>
<ellipse cx="14" cy="6" rx="12" ry="4" fill="#48d848"/>
<ellipse cx="12.5" cy="5.6" rx="8.5" ry="2.4" fill="#c8f4d0"/>
</svg>
<svg class="a" style="left:278px;top:26px" width="21" height="26" viewBox="0 0 21 26">
<path d="M2.1,2.1 H13.6 L18.9,7.4 V23.9 H2.1 Z" fill="none" stroke="#fff" stroke-width="2.2" stroke-linejoin="miter"/>
<path d="M12.2,2 V8.8 H19" fill="none" stroke="#fff" stroke-width="2"/>
<path d="M14.2,4 L17,7 H14.2 Z" fill="#0d4f6a"/>
<g fill="#fff">
<rect x="5" y="5" width="3" height="1"/>
<rect x="5" y="7" width="2" height="1"/><rect x="8" y="7" width="2" height="1"/>
<rect x="5" y="9" width="4" height="1"/>
<rect x="5" y="11" width="4" height="1"/><rect x="10" y="11" width="3" height="1"/><rect x="14" y="11" width="1" height="1"/>
<rect x="5" y="13" width="3" height="1"/><rect x="9" y="13" width="6" height="1"/>
<rect x="5" y="15" width="5" height="1"/><rect x="11" y="15" width="3" height="1"/>
<rect x="5" y="17" width="2" height="1"/><rect x="8" y="17" width="5" height="1"/>
<rect x="5" y="19" width="4" height="1"/><rect x="10" y="19" width="1" height="1"/><rect x="12" y="19" width="3" height="1"/>
</g></svg>
<svg class="a" style="left:416px;top:27px" width="25" height="24" viewBox="0 0 25 24">
<rect x="0" y="0" width="18" height="23" fill="#fff"/>
<rect x="9" y="11.5" width="16" height="11.5" fill="#1a6a88"/>
<rect x="10" y="12" width="14" height="11" fill="#fff"/>
<g fill="#0c4258">
<rect x="2" y="2" width="2" height="3"/><rect x="6" y="2" width="2" height="3"/><rect x="10" y="2" width="2" height="3"/><rect x="14" y="2" width="2" height="3"/>
<rect x="2" y="7" width="2" height="3"/><rect x="6" y="7" width="2" height="3"/><rect x="10" y="7" width="2" height="3"/><rect x="14" y="7" width="2" height="3"/>
<rect x="2" y="12" width="2" height="3"/><rect x="6" y="12" width="2" height="3"/>
<rect x="2" y="17" width="2" height="2"/><rect x="6" y="17" width="2" height="4"/>
<rect x="12" y="14" width="2" height="3"/><rect x="16" y="14" width="2" height="2"/><rect x="20" y="14" width="2" height="3"/>
<rect x="12" y="18" width="2" height="2"/><rect x="16" y="18" width="2" height="4"/><rect x="20" y="18" width="2" height="2"/>
</g></svg>
<svg class="a" style="left:589px;top:28px" width="27" height="23" viewBox="0 0 27 23">
<g fill="none" stroke="#fff" stroke-width="2">
<rect x="9.8" y="1.6" width="6.6" height="6.6"/>
<path d="M13.1,8.2 V12.6 M4.1,15 V12.6 H22.1 V15 M13.1,12.6 V15"/>
<rect x="1.6" y="15.6" width="5" height="5"/>
<rect x="10.6" y="15.6" width="5" height="5"/>
<rect x="19.6" y="15.6" width="5" height="5"/>
</g></svg>
<svg class="a" style="left:731px;top:27px" width="24" height="22" viewBox="0 0 24 22">
<defs><linearGradient id="bcg" x1="0" y1="0" x2="0" y2="1"><stop offset="0" stop-color="#fff"/><stop offset="1" stop-color="#e4e4e4"/></linearGradient></defs>
<path d="M7.8,5 V2.4 Q7.8,1.2 9,1.2 H15.8 Q17,1.2 17,2.4 V5" fill="none" stroke="#f4f4f4" stroke-width="2.2"/>
<rect x="1" y="5.8" width="22" height="15" fill="url(#bcg)"/>
<path d="M1,12.4 Q6,13.6 9.5,13.4 M14.5,13.4 Q18,13.6 23,12.4" stroke="#2e5a68" stroke-width="1.1" fill="none"/>
<rect x="9.4" y="11.4" width="5.6" height="4" rx="1.3" fill="#fff" stroke="#2e5a68" stroke-width="1.1"/>
</svg>
<svg class="a" style="left:854px;top:20px" width="36" height="36" viewBox="0 0 36 36">
<g fill="none" stroke="#fff" stroke-width="2" stroke-linejoin="round" stroke-linecap="round">
<path d="M10.2,9.4 L24.4,5.6 Q25.4,5.4 25.7,6.4 L28.2,16.6"/>
<path d="M7.2,13.1 L21.2,9.4 Q22.2,9.2 22.5,10.2 L25.4,20.6"/>
<path d="M21.9,23 L19.6,15.6 Q19.3,14.6 18.3,14.9 L5.8,18.2 Q4.8,18.5 5.1,19.5 L9,32.2 Q9.3,33.2 10.3,32.9 L22.8,29.7 Q23.8,29.4 23.5,28.4 L23.2,27.4"/>
<path d="M9.8,20.8 L16.8,18.6 M10.6,23.8 L17.6,21.7 M11.4,26.7 L18.5,24.6" stroke-width="1.3"/>
</g>
<path d="M21.6,26.4 L31.2,17.2" stroke="#fff" stroke-width="2.6" stroke-linecap="butt"/>
</svg>
<svg class="a" style="left:1004px;top:22px" width="34" height="34" viewBox="0 0 34 34">
<path d="M14.51,8.35 L14.73,5.22 L19.27,5.22 L19.49,8.35 L21.36,9.13 L23.73,7.06 L26.94,10.27 L24.87,12.64 L25.65,14.51 L28.78,14.73 L28.78,19.27 L25.65,19.49 L24.87,21.36 L26.94,23.73 L23.73,26.94 L21.36,24.87 L19.49,25.65 L19.27,28.78 L14.73,28.78 L14.51,25.65 L12.64,24.87 L10.27,26.94 L7.06,23.73 L9.13,21.36 L8.35,19.49 L5.22,19.27 L5.22,14.73 L8.35,14.51 L9.13,12.64 L7.06,10.27 L10.27,7.06 L12.64,9.13 Z" fill="#f6f6f6"/>
<circle cx="17" cy="17" r="6.3" fill="none" stroke="#1c5266" stroke-width="1.3"/>
<circle cx="17" cy="17" r="2.2" fill="#1a6c8c"/>
</svg>
<svg class="a" style="left:1166px;top:29px" width="28" height="20" viewBox="0 0 28 20">
<rect x="1" y="1" width="26" height="18" rx="1.6" fill="#fff"/>
<path d="M4,5 L14,11.6 L23.6,5" fill="none" stroke="#1f7ca0" stroke-width="1.4"/>
<path d="M9.6,9.6 L5.8,13.6 M18.4,9.6 L22,13.6" fill="none" stroke="#1f7ca0" stroke-width="1.1"/>
</svg>
<svg class="a" style="left:1398px;top:23px" width="28" height="30" viewBox="0 0 28 30">
<defs><linearGradient id="pwg" gradientUnits="userSpaceOnUse" x1="0" y1="6" x2="0" y2="28"><stop offset="0" stop-color="#fff"/><stop offset="1" stop-color="#e0e0e0"/></linearGradient></defs>
<path d="M9.45,8.62 A9.1,9.1 0 1 0 18.55,8.62" fill="none" stroke="url(#pwg)" stroke-width="3.9" stroke-linecap="round"/>
<path d="M14,4.2 V11.6" stroke="#fafafa" stroke-width="4.2" stroke-linecap="round"/>
</svg>
<svg class="a" style="left:26px;top:103px" width="24" height="24" viewBox="0 0 24 24">
<path d="M3.5,4.5 H9 L10.5,6 H20.5 V17 H3.5 Z" fill="#f4c060" stroke="#d89030" stroke-width="1"/>
<path d="M4,8 H20 V16.5 H4 Z" fill="#fde08a"/>
<path d="M12.3,8.8 H16.7 V13.3 H21.2 V17.7 H16.7 V22.2 H12.3 V17.7 H7.8 V13.3 H12.3 Z" fill="#7cd030" stroke="#3a9a10" stroke-width="1.1"/>
</svg>
<svg class="a" style="left:60px;top:103px" width="24" height="24" viewBox="0 0 24 24">
<path d="M3.5,3.5 H12.5 L16,7 V20.5 H3.5 Z" fill="#fff" stroke="#4a88cc" stroke-width="1"/>
<path d="M12.5,3.5 V7 H16" fill="none" stroke="#4a88cc" stroke-width="1"/>
<g stroke="#5a98d8" stroke-width="1"><path d="M5.5,6.5 H10 M5.5,9 H13 M5.5,11.5 H13 M5.5,14 H10 M5.5,16.5 H10"/></g>
<path d="M12.8,9.3 H17.2 V13.8 H21.7 V18.2 H17.2 V22.7 H12.8 V18.2 H8.3 V13.8 H12.8 Z" fill="#8cd040" stroke="#3a9a10" stroke-width="1.1"/>
</svg>
<svg class="a" style="left:94px;top:103px" width="24" height="24" viewBox="0 0 24 24">
<defs><linearGradient id="rxg" x1="0" y1="0" x2="0" y2="1"><stop offset="0" stop-color="#f04030"/><stop offset="1" stop-color="#f07060"/></linearGradient></defs>
<path d="M3.8,6.6 L6.6,3.8 L12,9.2 L17.4,3.8 L20.2,6.6 L14.8,12 L20.2,17.4 L17.4,20.2 L12,14.8 L6.6,20.2 L3.8,17.4 L9.2,12 Z" fill="url(#rxg)" stroke="#d82010" stroke-width=".6"/>
</svg>
<svg class="a" style="left:363px;top:112px" width="11" height="11" viewBox="0 0 11 11">
<path d="M1.2,1.2 L9.8,9.8 M9.8,1.2 L1.2,9.8" stroke="#7b9be8" stroke-width="2.2"/>
</svg>
<svg class="a" style="left:378px;top:110px" width="18" height="15" viewBox="0 0 18 15">
<rect x=".6" y=".6" width="16.8" height="13.8" rx="1.5" fill="#f4f4f4" stroke="#3a88d8" stroke-width="1.2"/>
<rect x="1.2" y="1.2" width="15.6" height="2" fill="#6ab8f0"/>
<rect x="2.5" y="4.2" width="13" height="3" fill="#c86a10"/>
<g stroke="#b0b0b0" stroke-width=".8"><path d="M2.8,9 H8 M10,9 H15 M2.8,11 H8 M10,11 H15 M2.8,13 H8 M10,13 H15"/></g>
</svg>
<svg class="a" style="left:991px;top:101px" width="31" height="31" viewBox="0 0 31 31">
<defs><linearGradient id="gcg" x1="0" y1="0" x2="1" y2="1"><stop offset="0" stop-color="#60d848"/><stop offset=".55" stop-color="#10a010"/><stop offset="1" stop-color="#30e020"/></linearGradient></defs>
<circle cx="15.4" cy="15.3" r="13.6" fill="url(#gcg)" stroke="#d8dcd8" stroke-width="1.2"/>
<g transform="translate(15.4,15.3) rotate(-42)">
<rect x="-7" y="-2.6" width="13" height="5.2" fill="#f4a820"/>
<rect x="-7" y="-2.6" width="13" height="1.8" fill="#ffd060"/>
<rect x="6" y="-2.6" width="1.6" height="5.2" fill="#e8f0f0"/>
<rect x="7.6" y="-2.6" width="2.6" height="5.2" fill="#f04868"/>
<path d="M-7,-2.6 L-11,0 L-7,2.6 Z" fill="#ffe0a0"/>
<path d="M-9.6,-0.9 L-11,0 L-9.6,0.9 Z" fill="#202020"/>
</g></svg>
<svg class="a" style="left:578px;top:251px" width="16" height="15" viewBox="0 0 16 15">
<rect x=".5" y=".5" width="15" height="14" rx="2" fill="#3a5a6c" stroke="#1c2c38"/>
<rect x="1.5" y="7" width="13" height="1" fill="#6a8898"/>
<path d="M7,2 V12 M9,2 V12" stroke="#d0a020" stroke-width="1"/>
<circle cx="8" cy="3.5" r="1.6" fill="#2a4050" stroke="#6a8898" stroke-width=".6"/>
<circle cx="8" cy="10.5" r="1.6" fill="#2a4050" stroke="#6a8898" stroke-width=".6"/>
<rect x="10.5" y="9" width="3.5" height="3.5" fill="#fff"/>
<rect x="2.5" y="2.5" width="2" height="2" fill="#8aa0b0"/>
</svg>
<svg class="a" style="left:887px;top:756px" width="10" height="10" viewBox="0 0 10 10"><g fill="#f4f4f4">
<rect x="7" y="1" width="2" height="2"/><rect x="4" y="4" width="2" height="2"/><rect x="7" y="4" width="2" height="2"/>
<rect x="1" y="7" width="2" height="2"/><rect x="4" y="7" width="2" height="2"/><rect x="7" y="7" width="2" height="2"/></g></svg>
</body></html>
